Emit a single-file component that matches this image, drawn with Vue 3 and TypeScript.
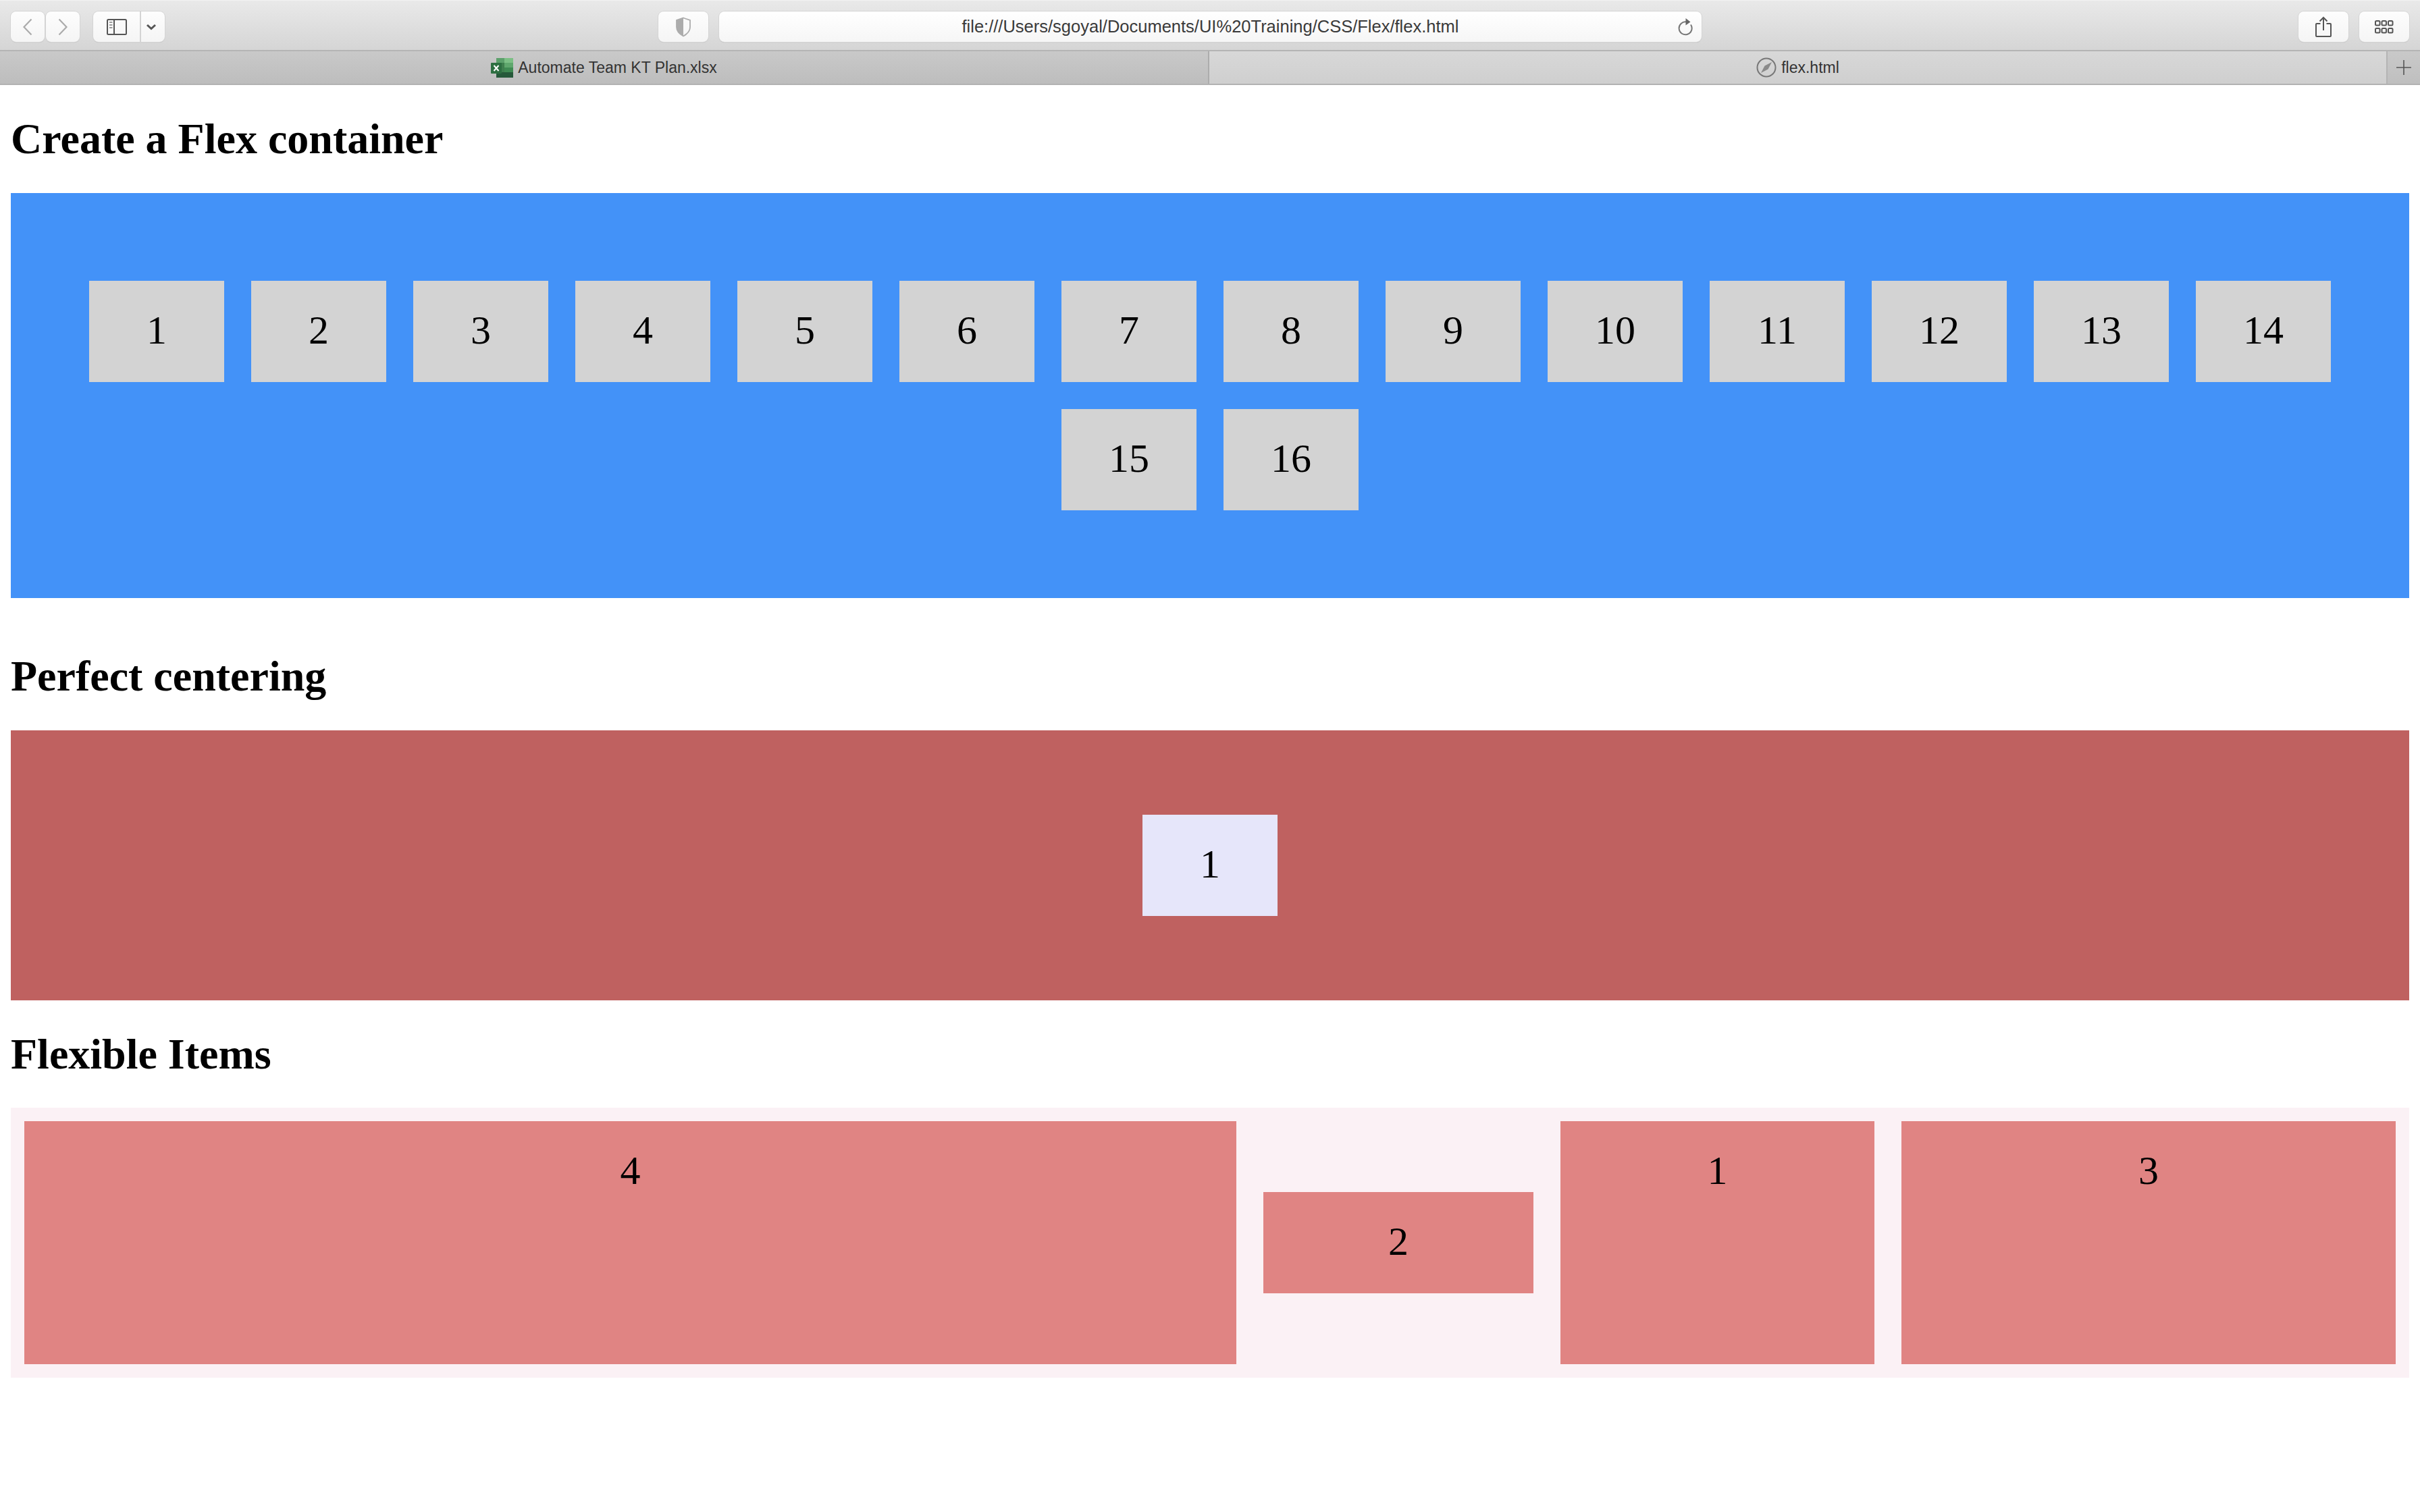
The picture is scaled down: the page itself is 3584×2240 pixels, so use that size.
<script setup lang="ts">
// flex demo page inside a Safari window
const numbers: number[] = Array.from({ length: 16 }, (_, i) => i + 1);
const url = "file:///Users/sgoyal/Documents/UI%20Training/CSS/Flex/flex.html";
</script>

<template>
	<div class="window">
		<header class="toolbar">
			<div class="left-tools">
				<div class="nav-btns">
					<button class="btn nav">
						<svg width="14" height="26" viewBox="0 0 14 26"><path d="M12.5 1.5 1.5 13l11 11.500" fill="none" stroke="#ababab" stroke-width="2.200" /></svg>
					</button>
					<button class="btn nav">
						<svg width="14" height="26" viewBox="0 0 14 26"><path d="M1.500 1.500 12.500 13l-11 11.500" fill="none" stroke="#ababab" stroke-width="2.200" /></svg>
					</button>
				</div>
				<div class="btn sidebar-btn">
					<span class="sidebar-icon">
						<svg width="30" height="24" viewBox="0 0 30 24">
							<rect x="1" y="1" width="28" height="22" rx="1.500" fill="none" stroke="#555" stroke-width="2" />
							<path d="M11 1v22" stroke="#555" stroke-width="2" />
							<path d="M4 5h4.500M4 9h4.500M4 13h4.500" stroke="#9a9a9a" stroke-width="2" />
						</svg>
					</span>
					<span class="sidebar-arrow">
						<svg width="16" height="10" viewBox="0 0 16 10"><path d="M2 2l6 5.500L14 2" fill="none" stroke="#555" stroke-width="3" /></svg>
					</span>
				</div>
			</div>
			<div class="center-tools">
				<button class="btn shield-btn">
					<svg width="24" height="30" viewBox="0 0 24 30">
						<path d="M12 1.500 2 5v10c0 6 4.500 10.500 10 13.500z" fill="#acacac" />
						<path d="M12 1.500 22 5v10c0 6-4.500 10.500-10 13.500-5.500-3-10-7.500-10-13.500V5z" fill="none" stroke="#acacac" stroke-width="1.800" />
					</svg>
				</button>
				<div class="url-bar">
					<span class="url-text">{{ url }}</span>
					<svg class="reload" width="24" height="28" viewBox="0 0 24 28">
						<path d="M15 6.500a9.500 9.500 0 1 0 6 4" fill="none" stroke="#777" stroke-width="2" />
						<path d="M13.500 1l7 5.500-7 5z" fill="#666" />
					</svg>
				</div>
			</div>
			<div class="right-tools">
				<button class="btn action">
					<svg width="24" height="32" viewBox="0 0 24 32">
						<path d="M7.500 11H2a1 1 0 0 0-1 1v17a1 1 0 0 0 1 1h20a1 1 0 0 0 1-1V12a1 1 0 0 0-1-1h-5.500" fill="none" stroke="#555" stroke-width="2" />
						<path d="M12 2v19M6.500 7.500 12 2l5.500 5.500" fill="none" stroke="#555" stroke-width="2" />
					</svg>
				</button>
				<button class="btn action">
					<svg width="30" height="22" viewBox="0 0 30 22">
						<g fill="none" stroke="#555" stroke-width="2">
							<rect x="2" y="2" width="6.500" height="6.500" rx="1.500" />
							<rect x="11.500" y="2" width="6.500" height="6.500" rx="1.500" />
							<rect x="21" y="2" width="6.500" height="6.500" rx="1.500" />
							<rect x="2" y="13" width="6.500" height="6.500" rx="1.500" />
							<rect x="11.500" y="13" width="6.500" height="6.500" rx="1.500" />
							<rect x="21" y="13" width="6.500" height="6.500" rx="1.500" />
						</g>
					</svg>
				</button>
			</div>
		</header>

		<nav class="tabs">
			<div class="tab tab-inactive">
				<svg width="33" height="29" viewBox="0 0 33 29">
					<rect x="8" y="0" width="25" height="29" rx="1" fill="#3f7f4e" />
					<rect x="20" y="0" width="13" height="7" fill="#7cbf85" />
					<rect x="8" y="0" width="12" height="7" fill="#5ca06b" />
					<rect x="20" y="7" width="13" height="7" fill="#5fa76d" />
					<rect x="20" y="14" width="13" height="7" fill="#3f8a52" />
					<rect x="8" y="21" width="25" height="8" fill="#26593a" />
					<rect x="0" y="7" width="16" height="16" rx="1" fill="#2d6f41" />
					<path d="M4.500 11l7 8M11.500 11l-7 8" stroke="#fff" stroke-width="2" />
				</svg>
				<span>Automate Team KT Plan.xlsx</span>
			</div>
			<div class="tab tab-active">
				<svg width="30" height="30" viewBox="0 0 30 30">
					<circle cx="15" cy="15" r="13.500" fill="none" stroke="#777" stroke-width="2" />
					<path d="M23 7l-5.500 10.500L7 23l5.500-10.500z" fill="#8a8a8a" />
				</svg>
				<span>flex.html</span>
			</div>
			<div class="tab-add">
				<svg width="22" height="22" viewBox="0 0 22 22"><path d="M11 0v22M0 11h22" stroke="#555" stroke-width="1.600" /></svg>
			</div>
		</nav>

		<main class="page">
			<h1>Create a Flex container</h1>
			<section class="flex-container">
				<div v-for="n in numbers" :key="n" class="box">{{ n }}</div>
			</section>

			<h1>Perfect centering</h1>
			<section class="center-container">
				<div class="box center-box">1</div>
			</section>

			<h1 class="flexible-title">Flexible Items</h1>
			<section class="flexible-container">
				<div class="item item-4">4</div>
				<div class="item item-2">2</div>
				<div class="item item-1">1</div>
				<div class="item item-3">3</div>
			</section>
		</main>
	</div>
</template>

<style>
html,
body {
	margin: 0;
	background: #fff;
}
</style>

<style scoped>
.window {
	width: 3584px;
	height: 2240px;
	overflow: hidden;
	background: #fff;
	color: #000;
	font-family: "Liberation Serif", serif;
}

/* browser chrome */
.toolbar {
	box-sizing: border-box;
	height: 76px;
	padding: 16px 16px 0;
	display: grid;
	grid-template-columns: 959px 1545px 1fr;
	align-items: start;
	background: linear-gradient(#e9e9e9, #d5d5d5);
	border-top: 1px solid #f2f2f2;
	border-bottom: 2px solid #b4b4b4;
}
.left-tools {
	display: flex;
	gap: 20px;
}
.nav-btns {
	display: flex;
	gap: 2px;
}
.btn {
	box-sizing: border-box;
	height: 45px;
	padding: 0;
	display: flex;
	align-items: center;
	justify-content: center;
	background: linear-gradient(#fdfdfd, #f5f5f5);
	border: none;
	border-radius: 8px;
	box-shadow: 0 0 0 1px #d4d4d4, 0 1px 1px #b8b8b8;
}
.nav {
	width: 50px;
}
.sidebar-btn {
	width: 106px;
	justify-content: flex-start;
}
.sidebar-icon {
	width: 69px;
	height: 100%;
	display: flex;
	align-items: center;
	justify-content: center;
	border-right: 2px solid #d4d4d4;
}
.sidebar-arrow {
	flex: 1;
	display: flex;
	justify-content: center;
	padding-right: 5px;
}
.center-tools {
	display: flex;
	gap: 16px;
}
.shield-btn {
	width: 74px;
}
.url-bar {
	box-sizing: border-box;
	position: relative;
	flex: 1;
	height: 45px;
	display: flex;
	align-items: center;
	justify-content: center;
	background: linear-gradient(#ffffff, #f6f6f6);
	border-radius: 8px;
	box-shadow: 0 0 0 1px #d4d4d4, 0 1px 1px #b0b0b0;
}
.url-text {
	font: 25.500px "Liberation Sans", sans-serif;
	color: #3a3a3a;
}
.reload {
	position: absolute;
	right: 13px;
	top: 9px;
}
.right-tools {
	display: flex;
	justify-content: flex-end;
	gap: 16px;
}
.action {
	width: 74px;
}

.tabs {
	box-sizing: border-box;
	height: 50px;
	display: grid;
	grid-template-columns: 1791px 1fr 50px;
	border-bottom: 2px solid #b2b2b2;
	font: 23px "Liberation Sans", sans-serif;
	color: #333;
}
.tab {
	display: flex;
	align-items: center;
	justify-content: center;
	gap: 7px;
}
.tab-inactive {
	background: linear-gradient(#c9c9c9, #bdbdbd);
	border-right: 2px solid #acacac;
}
.tab-active {
	background: linear-gradient(#d8d8d8, #cfcfcf);
}
.tab-add {
	display: flex;
	align-items: center;
	justify-content: center;
	background: linear-gradient(#c9c9c9, #bfbfbf);
	border-left: 2px solid #b4b4b4;
}

/* page content */
.page {
	padding: 0 16px;
}
h1 {
	margin: 43px 0;
	font-size: 64px;
	line-height: 74px;
	font-weight: bold;
}
.flexible-title {
	margin-bottom: 42px;
}
.box {
	width: 200px;
	height: 150px;
	margin: 20px;
	background: #d3d3d3;
	font-size: 60px;
	line-height: 146px;
	text-align: center;
}
.flex-container {
	height: 600px;
	margin-bottom: 79px;
	display: flex;
	flex-wrap: wrap;
	justify-content: center;
	align-content: center;
	background: #4392f8;
}
.center-container {
	height: 400px;
	display: flex;
	align-items: center;
	justify-content: center;
	background: #bf6160;
}
.center-box {
	margin: 0;
	background: #e6e6fa;
}
.flexible-container {
	height: 400px;
	display: flex;
	background: #fbf1f5;
}
.item {
	margin: 20px;
	background: #e08483;
	font-size: 60px;
	line-height: 146px;
	text-align: center;
}
.item-4 {
	flex: 0 0 1795px;
}
.item-2 {
	flex: 0 0 400px;
	height: 150px;
	align-self: center;
}
.item-1 {
	flex: 0 0 465px;
}
.item-3 {
	flex: 1;
}
</style>
